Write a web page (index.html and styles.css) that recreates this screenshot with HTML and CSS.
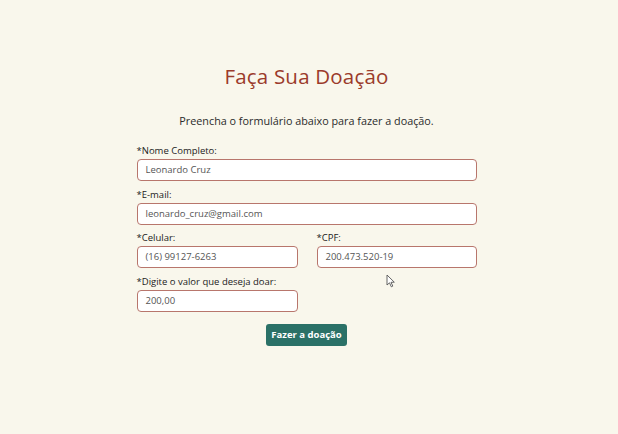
FILE: index.html
```html
<!DOCTYPE html>
<html lang="pt-BR">
<head>
<meta charset="utf-8">
<title>Faça Sua Doação</title>
<link rel="stylesheet" href="styles.css">
</head>
<body>
<main class="page">
  <h1 class="title">Faça Sua Doação</h1>
  <p class="subtitle">Preencha o formulário abaixo para fazer a doação.</p>
  <form class="form">
    <div class="field">
      <label class="label">*Nome Completo:</label>
      <div class="input">Leonardo Cruz</div>
    </div>
    <div class="field">
      <label class="label">*E-mail:</label>
      <div class="input">leonardo_cruz@gmail.com</div>
    </div>
    <div class="row">
      <div class="field">
        <label class="label">*Celular:</label>
        <div class="input">(16) 99127-6263</div>
      </div>
      <div class="field">
        <label class="label">*CPF:</label>
        <div class="input">200.473.520-19</div>
      </div>
    </div>
    <div class="row">
      <div class="field">
        <label class="label">*Digite o valor que deseja doar:</label>
        <div class="input">200,00</div>
      </div>
    </div>
    <div class="actions">
      <button type="button" class="btn">Fazer a doação</button>
    </div>
  </form>
  <svg class="cursor" width="10" height="14" viewBox="0 0 10 14"><path d="M1 1 L1 11 L3.5 8.8 L5.3 12.8 L6.8 12.1 L5 8.3 L8.3 8.2 Z" fill="#fff" stroke="#555" stroke-width="0.9" stroke-linejoin="round"/></svg>
</main>
</body>
</html>
```
FILE: styles.css
```css
html, body { margin: 0; padding: 0; }
body {
  background: #f9f7ec;
  font-family: "Open Sans", "Noto Sans", sans-serif;
  width: 618px;
  height: 434px;
  overflow: hidden;
}
.page {
  position: relative;
  box-sizing: border-box;
  width: 618px;
  padding-right: 5px;
  display: flex;
  flex-direction: column;
  align-items: center;
  padding-top: 62px;
}
.title {
  margin: 0;
  font-family: "Open Sans", sans-serif;
  font-weight: 400;
  font-size: 20.5px;
  line-height: 28px;
  color: #9b3b2b;
  letter-spacing: 0.2px;
}
.subtitle {
  margin: 23px 0 0 0;
  font-size: 10.8px;
  line-height: 16px;
  color: #2b2b2b;
}
.form {
  margin-top: 16px;
  width: 340px;
  display: flex;
  flex-direction: column;
  gap: 7.7px;
}
.field {
  display: flex;
  flex-direction: column;
  gap: 2px;
}
.label {
  font-size: 9.5px;
  line-height: 12px;
  color: #222;
}
.input {
  box-sizing: border-box;
  height: 22px;
  background: #fff;
  border: 1px solid #b8766c;
  border-radius: 4px;
  padding: 0 8px;
  font-size: 9.5px;
  line-height: 20px;
  color: #555;
}
.row {
  display: flex;
  gap: 19px;
}
.row .field { width: 161px; }
.row .field:nth-child(2) { flex: 1; }
.actions {
  display: flex;
  justify-content: center;
  margin-top: 4px;
}
.btn {
  width: 81px;
  height: 22px;
  background: #2b7167;
  color: #fff;
  border: none;
  border-radius: 3px;
  font-family: "Open Sans", sans-serif;
  font-weight: 700;
  font-size: 9.5px;
  padding: 0;
}
.cursor {
  position: absolute;
  left: 386px;
  top: 274px;
}
```
